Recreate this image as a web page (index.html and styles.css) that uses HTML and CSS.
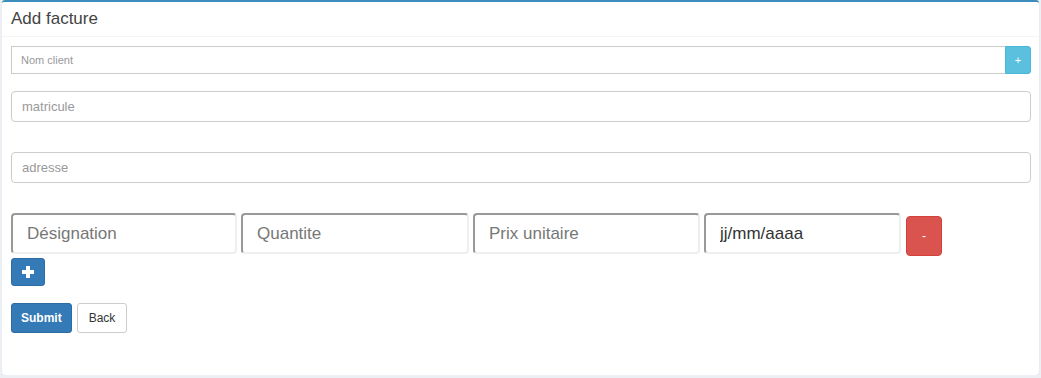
FILE: index.html
```html
<!DOCTYPE html>
<html lang="fr">
<head>
  <meta charset="UTF-8" />
  <meta name="viewport" content="width=device-width, initial-scale=1.0"/>
  <title>Add facture</title>
  <link rel="stylesheet" href="styles.css">
</head>
<body>

  <div class="box">
    <div class="box-header">
      <h3 class="box-title">Add facture</h3>
    </div>

    <form class="box-body">
      <!-- client -->
      <div class="input-group">
        <input type="text" class="input-sm" placeholder="Nom client">
        <button type="button" class="btn-info">+</button>
      </div>

      <input type="text" class="form-control" placeholder="matricule">
      <input type="text" class="form-control adresse" placeholder="adresse">

      <!-- lignes de la facture -->
      <div class="ligne">
        <input type="text" class="champ w1" placeholder="Désignation">
        <input type="text" class="champ w2" placeholder="Quantite">
        <input type="text" class="champ w3" placeholder="Prix unitaire">
        <input type="text" class="champ w4" value="jj/mm/aaaa">
        <button type="button" class="btn-danger">-</button>
      </div>

      <button type="button" class="btn-add">
        <svg width="12" height="12" viewBox="0 0 12 12"><rect x="4" y="0" width="4" height="12" fill="#fff"/><rect x="0" y="4" width="12" height="4" fill="#fff"/></svg>
      </button>

      <div class="actions">
        <button type="submit" class="btn-primary">Submit</button>
        <button type="button" class="btn-default">Back</button>
      </div>
    </form>
  </div>

</body>
</html>
```

FILE: styles.css
```css
body {
  margin: 0;
  background: #ecf0f5;
  font-family: "Liberation Sans", Arial, Helvetica, sans-serif;
  color: #333;
}
.box {
  margin: 0 2px 0 2px;
  height: 373px;
  background: #fff;
  border-top: 2px solid #3c8dbc;
  border-radius: 3px;
  box-shadow: 0 1px 1px rgba(0,0,0,0.12);
}
.box-header {
  padding: 7px 9px 8px 9px;
  border-bottom: 1px solid #f4f4f4;
}
.box-title {
  margin: 0;
  font-size: 17px;
  line-height: 19px;
  font-weight: normal;
  color: #444;
}
.box-body {
  padding: 9px 8px 0 9px;
}
input::placeholder {
  color: #999;
}
.input-group {
  display: flex;
  height: 28px;
}
.input-sm {
  flex: 1;
  box-sizing: border-box;
  height: 28px;
  margin: 0;
  padding: 0 9px;
  border: 1px solid #ccc;
  border-right: none;
  font-family: inherit;
  font-size: 11px;
}
.btn-info {
  width: 26px;
  height: 28px;
  margin: 0;
  padding: 0;
  background: #5bc0de;
  border: 1px solid #46b8da;
  border-radius: 0 3px 3px 0;
  color: #fff;
  font-family: inherit;
  font-size: 11px;
}
.form-control {
  display: block;
  box-sizing: border-box;
  width: 100%;
  height: 31px;
  margin-top: 17px;
  padding: 0 10px;
  border: 1px solid #ccc;
  border-radius: 4px;
  font-family: inherit;
  font-size: 13px;
}
.adresse {
  margin-top: 30px;
}
.ligne {
  display: flex;
  align-items: flex-start;
  gap: 4px;
  margin-top: 30px;
}
.champ {
  box-sizing: border-box;
  height: 41px;
  margin: 0;
  padding: 0 14px;
  border: 2px solid #eee;
  border-top-color: #999;
  border-left-color: #999;
  border-radius: 4px;
  font-family: inherit;
  font-size: 17px;
  color: #333;
}
.champ::placeholder {
  color: #777;
}
.w1 { width: 226px; }
.w2 { width: 228px; }
.w3 { width: 227px; }
.w4 { width: 197px; }
.btn-danger {
  width: 36px;
  height: 40px;
  margin: 3px 0 0 1px;
  background: #d9534f;
  border: 1px solid #d43f3a;
  border-radius: 4px;
  color: #fff;
  font-size: 12px;
}
.btn-add {
  display: flex;
  align-items: center;
  justify-content: center;
  width: 34px;
  height: 28px;
  margin-top: 2px;
  padding: 0;
  background: #337ab7;
  border: 1px solid #2e6da4;
  border-radius: 3px;
}
.actions {
  display: flex;
  gap: 5px;
  margin-top: 17px;
}
.actions button {
  height: 30px;
  border-radius: 3px;
  font-family: inherit;
  font-size: 12px;
}
.btn-primary {
  padding: 0 9px;
  background: #337ab7;
  border: 1px solid #2e6da4;
  color: #fff;
  font-weight: bold;
}
.btn-default {
  padding: 0 11px;
  background: #fff;
  border: 1px solid #ccc;
  color: #333;
}
```
